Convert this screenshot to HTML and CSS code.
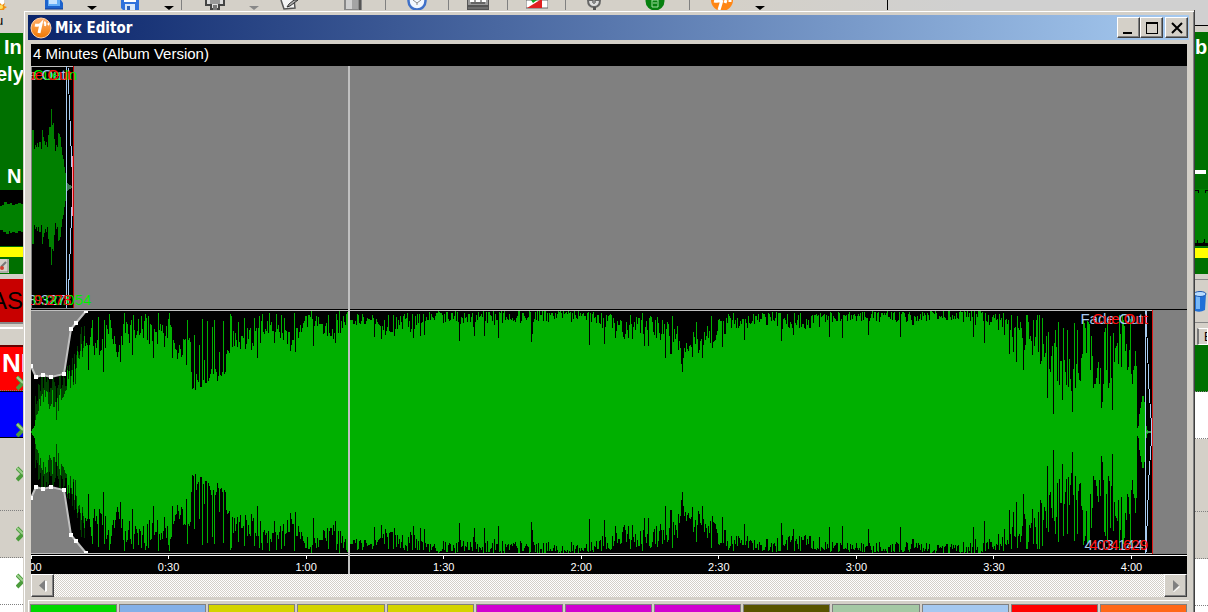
FILE: index.html
```html
<!DOCTYPE html>
<html lang="en">
<head>
<meta charset="utf-8">
<meta name="viewport" content="width=device-width, initial-scale=1">
<title>Mix Editor</title>
<link rel="stylesheet" href="styles.css">
</head>
<body>
<div class="desktop">
  <header class="toolbar">
    <button class="tool tool-new" aria-label="New"><svg width="8" height="13" viewBox="0 0 8 13"><path d="M0 0h4v10H0z" fill="#fff"/><path d="M0 3l2 2 3-2-1 3 3 1-3 2 1 3-3-1-2 1z" fill="#f09010"/><circle cx="1" cy="7" r="2" fill="#ffe060"/></svg></button>
    <button class="tool" aria-label="Open"><svg width="20" height="10" viewBox="0 0 20 10"><path d="M1 0h16l2 3v6H1z" fill="#1c62cc"/><path d="M4 0h12v6H4z" fill="#63aef8"/><path d="M5 0h8v4H5z" fill="#c6e4ff"/><path d="M1 9h18" stroke="#123c90"/></svg></button>
    <button class="tool" aria-label="Open menu"><svg width="10" height="10" viewBox="0 0 10 10"><path d="M0 6h10L5 10z"/></svg></button>
    <button class="tool" aria-label="Save"><svg width="18" height="10" viewBox="0 0 18 10"><path d="M0 0h18v10H2L0 8z" fill="#2f72dc"/><path d="M3 0h12v2H3z" fill="#fff"/><path d="M4 4h10v6H4z" fill="#d8e8fa"/><path d="M6 6h3v4H6z" fill="#2f62b8"/></svg></button>
    <button class="tool sep" aria-label="Save menu"><svg width="10" height="10" viewBox="0 0 10 10"><path d="M0 6h10L5 10z"/></svg></button>
    <button class="tool" aria-label="Device"><svg width="20" height="10" viewBox="0 0 20 10"><path d="M1 0v5h5v4h8V5h5V0" fill="#ddd" stroke="#444" stroke-width="2"/><path d="M5 0h10v4H5z" fill="#999"/><path d="M8 5h4v5H8z" fill="#777"/></svg></button>
    <button class="tool" aria-label="Device menu"><svg width="10" height="10" viewBox="0 0 10 10"><path d="M0 6h10L5 10z" fill="#888"/></svg></button>
    <button class="tool" aria-label="Edit"><svg width="20" height="10" viewBox="0 0 20 10"><path d="M1 0l3 9 11-1-1-8" fill="#f4f4f4" stroke="#555" stroke-width="1.5"/><path d="M18 0l-8 6-3 1 2-3 5-4z" fill="#aaa" stroke="#333"/></svg></button>
    <button class="tool sep" aria-label="Library"><svg width="18" height="10" viewBox="0 0 18 10"><path d="M0 0h18v10H0z" fill="#888"/><path d="M2 0h6v9H2z" fill="#d0d0d0"/><path d="M8 0h6v9H8z" fill="#a4a4a4"/><path d="M15 0h2v10h-2z" fill="#555"/></svg></button>
    <button class="tool sep" aria-label="Scheduler"><svg width="20" height="11" viewBox="0 0 20 11"><circle cx="10" cy="1" r="8.5" fill="#f3f8ff" stroke="#3f70c8" stroke-width="2.5"/><path d="M6 0l4 3 4-3M10 3v2" fill="none" stroke="#888"/></svg></button>
    <button class="tool sep" aria-label="Carts"><svg width="22" height="10" viewBox="0 0 22 10"><path d="M0 0h22v10H0z" fill="#555"/><path d="M1 0h20v5H1z" fill="#999"/><path d="M3 1h4m2 0h4m2 0h4" stroke="#fff" stroke-width="2"/><path d="M4 3h14" stroke="#333"/><path d="M1 8h20" stroke="#888"/></svg></button>
    <button class="tool sep" aria-label="Levels"><svg width="22" height="9" viewBox="0 0 22 9"><path d="M0 0h22v8H0z" fill="#fff" stroke="#666"/><path d="M1 8L14 0h2v8z" fill="#e02020"/><path d="M5 0h6L7 3z" fill="#10a020"/></svg></button>
    <button class="tool" aria-label="Microphone"><svg width="16" height="10" viewBox="0 0 16 10"><path d="M2 0q0 7 6 7t6-7z" fill="#ddd" stroke="#666" stroke-width="2"/><path d="M8 0v4M6 2h4" stroke="#888" stroke-width="2"/><path d="M7 7h3v3H7z" fill="#555"/></svg></button>
    <button class="tool sep" aria-label="Remote"><svg width="20" height="11" viewBox="0 0 20 11"><circle cx="10" cy="1" r="9.5" fill="#078010"/><path d="M7 0h6v7H7zM8 3h4" fill="none" stroke="#a0e0a0"/></svg></button>
    <button class="tool" aria-label="About"><svg width="24" height="11" viewBox="0 0 24 11"><circle cx="12" cy="0" r="11" fill="#ff8614"/><path d="M4 1q5 1 7-1M12 0L9 10M16 0l-1 3M20 0v2" fill="none" stroke="#fff" stroke-width="3"/></svg></button>
    <button class="tool" aria-label="About menu"><svg width="10" height="10" viewBox="0 0 10 10"><path d="M0 6h10L5 10z"/></svg></button>
    <span class="toolbar-end"></span>
  </header>

  <aside class="left">
    <div class="left-head">u</div>
    <div class="deck"><span class="deck-line">In</span><span class="deck-line deck-wide">elyn</span><span class="deck-next">N</span></div>
    <div class="mini-wave"><svg width="24" height="56" viewBox="0 0 24 56"><path fill="#008000" d="M0 16h2v-1h2v-3h3v2h3v-1h2v2h3v-1h3v-1h3v1h3v28h-3v-1h-3v2h-3v-1h-3v1h-2v-2H9v3H6v-2H3v-2H0z"/></svg></div>
    <div class="yellow"></div>
    <div class="mini-tool"><svg width="9" height="14" viewBox="0 0 9 14"><path d="M0 0h9v14H0z" fill="#d4d0c8"/><path d="M0 13h8V0" fill="none" stroke="#888"/><path d="M1 8l5-5" stroke="#777" stroke-width="2"/><circle cx="2" cy="9" r="2" fill="#d04030"/></svg></div>
    <button class="assist">AS</button>
    <div class="left-gap"></div>
    <div class="row row-now"><span>NI</span><svg class="chev" width="9" height="16" viewBox="0 0 9 16"><path d="M1 2l6 6-6 6" fill="none" stroke="#4c9c3c" stroke-width="4"/><path d="M1 2l6 6" stroke="#9cd08c" stroke-width="2"/></svg></div>
    <div class="row row-next"><svg class="chev" width="9" height="16" viewBox="0 0 9 16"><path d="M1 2l6 6-6 6" fill="none" stroke="#4c9c3c" stroke-width="4"/><path d="M1 2l6 6" stroke="#9cd08c" stroke-width="2"/></svg></div>
    <div class="row row-tall"><svg class="chev" width="9" height="16" viewBox="0 0 9 16"><path d="M1 2l6 6-6 6" fill="none" stroke="#4c9c3c" stroke-width="4"/><path d="M1 2l6 6" stroke="#9cd08c" stroke-width="2"/></svg></div>
    <div class="row"><svg class="chev" width="9" height="16" viewBox="0 0 9 16"><path d="M1 2l6 6-6 6" fill="none" stroke="#4c9c3c" stroke-width="4"/><path d="M1 2l6 6" stroke="#9cd08c" stroke-width="2"/></svg></div>
    <div class="row row-white"><svg class="chev" width="9" height="16" viewBox="0 0 9 16"><path d="M1 2l6 6-6 6" fill="none" stroke="#4c9c3c" stroke-width="4"/><path d="M1 2l6 6" stroke="#9cd08c" stroke-width="2"/></svg></div>
    <div class="row-rest"></div>
  </aside>

  <main class="window">
    <div class="titlebar">
      <svg class="logo" width="22" height="22" viewBox="0 0 22 22"><defs><linearGradient id="og" x1="0" y1="0" x2="0" y2="1"><stop offset="0" stop-color="#ffb070"/><stop offset="1" stop-color="#f07800"/></linearGradient></defs><circle cx="11" cy="11" r="10" fill="url(#og)" stroke="#ffd2a4"/><path d="M5 8q4 1 6-1L9 16" fill="none" stroke="#fff" stroke-width="3"/><path d="M14 5q2 1 1 4M18 6q1 1 0 2" fill="none" stroke="#fff" stroke-width="2"/></svg>
      <h1 class="title">Mix Editor</h1>
      <button class="win-btn" aria-label="Minimize"><svg width="17" height="15" viewBox="0 0 17 15"><path d="M3 13h9" stroke="#000" stroke-width="2"/></svg></button>
      <button class="win-btn" aria-label="Maximize"><svg width="17" height="15" viewBox="0 0 17 15"><path d="M3.500 3v11M14.500 3v11M3 13.500h12" stroke="#000"/><path d="M3 3h12" stroke="#000" stroke-width="2"/></svg></button>
      <button class="win-btn close" aria-label="Close"><svg width="17" height="15" viewBox="0 0 17 15"><path d="M4 3l10 10M14 3L4 13" stroke="#000" stroke-width="2"/></svg></button>
    </div>
    <div class="editor">
      <div class="song">4 Minutes (Album Version)</div>
      <div class="timeline">
        <section class="track track-a">
          <svg class="wave" viewBox="0 0 1156 243" preserveAspectRatio="none" shape-rendering="crispEdges">
            <path d="M1 0h42v242H1z"/>
            <path d="M0 .5h43" stroke="#c0c0c0"/>
            <path id="waveA" fill="#008000"/>
            <path d="M35 116l7 5-7 5z" fill="#3c7850"/>
            <path d="M37 2l3 78 2 41M37 240l3-78 2-41" fill="none" stroke="#a6caf0"/>
            <path d="M35 0h1v242h-1z" fill="#a6caf0"/>
            <path d="M41 90h1v60h-1z" fill="#ff90a0"/>
            <path d="M42 0h1v242h-1z" fill="#c80000"/>
          </svg>
          <span class="mark top fade mark-a-fade">Fade Out</span><span class="mark top in">Cue In</span><span class="mark top cue mark-a-cue">Cue Out</span>
          <span class="mark bottom fade mark-a-fade">3:18.327</span><span class="mark bottom in">0:00.054</span><span class="mark bottom cue mark-a-cue">3:19.278</span>
        </section>
        <section class="track track-b">
          <svg class="wave" viewBox="0 0 1156 244" preserveAspectRatio="none" shape-rendering="crispEdges">
            <path d="M0 0h1122v244H0z"/>
            <path id="waveDark" fill="#004000"/>
            <path id="waveB" fill="#00b000"/>
            <path d="M1115 122h7" stroke="#3c9c50" stroke-width="2"/>
            <path d="M0 0v56l5 11 7-2 8 2 13-3 7-45 5-6 10-12V0zM0 244v-56l5-11 7 2 8-2 13 3 7 45 5 6 10 12z" fill="#808080"/>
            <path d="M0 56l5 11 7-2 8 2 13-3 7-45 5-6 10-12M0 188l5-11 7 2 8-2 13 3 7 45 5 6 10 12" fill="none" stroke="#c0c0c0" stroke-width="2" shape-rendering="auto"/>
            <path id="nodes" fill="#fff"/>
            <path d="M0 .5h1122M0 243.500h1122" stroke="#c0c0c0"/>
            <path d="M1115 1l3 78 3 43M1115 243l3-78 3-43" fill="none" stroke="#a6caf0"/>
            <path d="M1114 0h1v244h-1z" fill="#a6caf0"/>
            <path d="M1121 0h1v244h-1z" fill="#e01818"/>
          </svg>
          <span class="mark top fade mark-b-fade">Fade Out</span><span class="mark top cue mark-b-cue">Cue Out</span>
          <span class="mark bottom fade mark-b-fade">4:03.144</span><span class="mark bottom cue mark-b-cue">4:04.629</span>
        </section>
        <div class="ruler"><span>0:00</span><span>0:30</span><span>1:00</span><span>1:30</span><span>2:00</span><span>2:30</span><span>3:00</span><span>3:30</span><span>4:00</span></div>
        <div class="playhead"></div>
      </div>
      <div class="scrollbar">
        <button class="scroll-btn" aria-label="Scroll left"><svg width="9" height="12" viewBox="0 0 9 12"><path d="M7 1v11l2-1V1z" fill="#fff"/><path d="M7 0v11L1 5.500z" fill="#808080"/></svg></button>
        <button class="scroll-btn" aria-label="Scroll right"><svg width="9" height="12" viewBox="0 0 9 12"><path d="M2 12l6-6 1 1-6 5z" fill="#fff"/><path d="M2 0v11l6-5.500z" fill="#808080"/></svg></button>
      </div>
    </div>
    <div class="carts">
      <button class="cart green" aria-label="Cart 1"></button><button class="cart blue" aria-label="Cart 2"></button><button class="cart gold" aria-label="Cart 3"></button><button class="cart gold" aria-label="Cart 4"></button><button class="cart gold" aria-label="Cart 5"></button><button class="cart magenta" aria-label="Cart 6"></button><button class="cart magenta" aria-label="Cart 7"></button><button class="cart magenta" aria-label="Cart 8"></button><button class="cart olive" aria-label="Cart 9"></button><button class="cart sage" aria-label="Cart 10"></button><button class="cart sky" aria-label="Cart 11"></button><button class="cart red" aria-label="Cart 12"></button><button class="cart orange" aria-label="Cart 13"></button>
    </div>
  </main>

  <aside class="right">
    <div class="right-head"></div>
    <div class="right-deck">b<span class="level"></span></div>
    <div class="right-wave"><svg width="13" height="58" viewBox="0 0 13 58"><path fill="#008000" d="M0 0h13v58H0z"/><path d="M0 1h4v3H3V2H0zM10 1h3v1h-2v2h-1zM0 54h2v-3h1v3h5v-1h1v-3h1v4h3v3H0z"/></svg></div>
    <div class="yellow"></div>
    <div class="right-foot"></div>
    <div class="bin"><svg width="12" height="22" viewBox="0 0 12 22"><path d="M0 3h11l-1 16q-5 3-10 1z" fill="#2070d8"/><path d="M1 5h4v13H1z" fill="#78b8f8"/><ellipse cx="5" cy="3" rx="6" ry="2.500" fill="#b8dcff" stroke="#1c58b0"/></svg></div>
    <div class="col-head">E</div>
    <div class="row row-green"></div>
    <div class="row row-white"></div>
    <div class="row row-tall"></div>
    <div class="row"></div>
    <div class="row row-white"></div>
    <div class="row-rest"></div>
  </aside>
</div>
<script src="waveform.js"></script>
</body>
</html>
```

FILE: styles.css
```css
* { box-sizing: border-box; }
body {
  margin: 0;
  background: #d4d0c8;
  font-family: "Liberation Sans", Arial, sans-serif;
}
button { padding: 0; border: 0; border-radius: 0; font: inherit; background: none; }
svg { display: block; flex: none; }

.desktop {
  display: grid;
  grid-template-columns: 23px minmax(0, 1fr) 13px;
  grid-template-rows: 10px minmax(0, 1fr);
  height: 100vh;
  overflow: hidden;
}

/* application toolbar behind the window */
.toolbar {
  grid-column: 1 / -1;
  display: grid;
  grid-template-columns: 28px 52px 24px 52px 26px 66px 12px 60px 66px 63px 59px 58px 55px 69px 64px 12px 122px;
  justify-items: center;
  background: linear-gradient(90deg, #d4d0c8 60%, #d0d0d0 80%);
}
.toolbar > :nth-child(n) { height: 10px; }
.tool { width: 100%; display: flex; justify-content: center; overflow: hidden; }
.tool-new { justify-content: flex-start; }
.sep { border-right: 1px solid #808080; }
.toolbar-end { width: 100%; border-right: 1px solid #000; }

/* side strips */
.left, .right { display: flex; flex-direction: column; min-width: 0; overflow: hidden; }
.left > *, .right > * { flex: none; overflow: hidden; }
.left-head { height: 23px; font-size: 13px; line-height: 22px; text-indent: -4px; }
.deck {
  display: flex;
  flex-direction: column;
  height: 157px;
  background: #007000;
  color: #fff;
  font-size: 20px;
  font-weight: bold;
  line-height: 26px;
}
.deck-line { padding: 1px 0 0 4px; }
.deck-wide { margin-left: -8px; }
.deck-next { padding: 76px 0 0 7px; }
.mini-wave { height: 56px; background: #000; }
.yellow { height: 11px; border-top: 1px solid #007000; background: #ff0; }
.mini-tool { height: 17px; padding-top: 2px; background: #007000; }
.assist {
  height: 48px;
  border-top: 5px solid #d4d0c8;
  background: #c80000;
  color: #000;
  font-size: 24px;
  line-height: 43px;
  text-align: left;
  text-indent: -9px;
}
.left-gap { height: 23px; border-top: 2px solid #888; background: linear-gradient(#d4d0c8 3px, #fff 3px, #fff 5px, #d4d0c8 5px); }
.row { height: 47px; border-bottom: 1px dotted #808080; background: #d4d0c8; }
.left .row { display: flex; flex-direction: column; justify-content: center; align-items: flex-end; }
.left .row-now {
  height: 46px;
  justify-content: flex-start;
  border-top: 2px solid #600;
  background: #f00;
  color: #fff;
  font-size: 26px;
  font-weight: bold;
  line-height: 24px;
  padding-top: 4px;
}
.row-now span { align-self: flex-start; padding-left: 2px; }
.chev { margin-right: -2px; }
.left .row-next { background: #00f; border: 1px solid #000; border-width: 1px 0; padding-top: 30px; }
.row-tall { height: 73px; }
.left .row-white, .row-white { background: #fff; }
.row-rest { height: 20px; background: #fff; }
.right-head { height: 22px; background: linear-gradient(#d0d0d0 15px, #000 15px, #000 16px, #d4d0c8 16px); }
.right-deck { height: 157px; background: #007000; color: #fff; font-size: 20px; font-weight: bold; line-height: 30px; }
.level { display: block; width: 11px; height: 4px; margin-top: 108px; background: #fff; }
.right-wave { height: 58px; }
.right-foot { height: 16px; background: #007000; }
.bin { height: 44px; margin-top: 5px; padding-top: 11px; border-top: 1px solid #888; border-bottom: 1px solid #888; }
.col-head { height: 17px; margin: 5px 0 0 2px; border: 1px solid #fff; border-left: 2px solid #777; padding-left: 5px; font-size: 12px; line-height: 17px; }
.row-green { background: #007000; }

/* window frame */
.window {
  display: flex;
  flex-direction: column;
  min-width: 0;
  border-right: 1px solid #404040;
  box-shadow: inset 1px 0 #d4d0c8, inset 0 1px #d4d0c8, inset 2px 2px #fff, inset -1px 0 #808080;
  background: #d4d0c8;
  padding: 5px 5px 0;
}
.titlebar {
  flex: none;
  display: flex;
  align-items: center;
  height: 25px;
  padding: 0 1px 0 2px;
  background: linear-gradient(90deg, #0a246a, #a6caf0);
}
.title {
  flex: 1;
  margin: 0 0 0 3px;
  color: #fff;
  font: bold 15px/20px "DejaVu Sans Condensed", "DejaVu Sans", sans-serif;
}
.win-btn, .scroll-btn {
  background: #d4d0c8;
  border: 1px solid;
  border-color: #fff #404040 #404040 #fff;
  box-shadow: inset -1px -1px #808080;
}
.win-btn { width: 23px; height: 21px; padding: 1px 2px; }
.close { margin-left: 2px; }
.editor { flex: 1; min-height: 0; display: flex; flex-direction: column; margin: 4px 2px 0 3px; }
.song { height: 22px; padding-left: 2px; background: #000; color: #fff; font-size: 15px; line-height: 20px; }

.timeline { position: relative; flex: 1; min-height: 0; display: flex; flex-direction: column; }
.track { position: relative; min-height: 0; overflow: hidden; background: #808080; border-bottom: 1px solid #000; }
.track-a { flex: 244 0 0; }
.track-b { flex: 245 0 0; }
.wave { width: 100%; height: 100%; }
.mark { position: absolute; font-size: 15px; line-height: 17px; white-space: nowrap; }
.top { top: 0; }
.bottom { bottom: 1px; }
.fade { color: #a6caf0; }
.cue { color: #ff1010; }
.in { color: #0e0; left: 2px; }
.mark-a-fade { right: 97%; }
.mark-a-cue { right: 96.5%; }
.mark-b-fade { right: 44px; }
.mark-b-cue { right: 39px; }
.ruler {
  flex: none;
  display: grid;
  grid-template-columns: repeat(9, 11.9%);
  height: 19px;
  overflow: hidden;
  background: #000;
  border-top: 1px solid #fff;
  color: #fff;
  font-size: 11px;
  line-height: 16px;
  text-align: center;
}
.ruler span { margin-left: -100%; }
.ruler span::before { content: ""; display: block; width: 1px; height: 3px; margin: 0 auto; background: #fff; }
.playhead { position: absolute; top: 0; bottom: 0; left: 27.4%; width: 2px; background: #c0c0c0; }

.scrollbar {
  flex: none;
  display: flex;
  justify-content: space-between;
  height: 23px;
  background: conic-gradient(#d4d0c8 25%, #fff 0 50%, #d4d0c8 0 75%, #fff 0) 0 0 / 2px 2px;
}
.scroll-btn { width: 23px; display: flex; align-items: center; justify-content: center; }

/* cart strip */
.carts {
  flex: none;
  display: grid;
  grid-template-columns: repeat(13, minmax(0, 1fr));
  gap: 2px;
  height: 12px;
  margin-top: 3px;
  padding: 3px 2px 0 1px;
  border-top: 1px solid #fff;
  border-left: 1px solid #fff;
}
.cart { border: 1px solid #808080; border-bottom: 0; }
.green { background: #00d800; }
.blue { background: #84b0e8; }
.gold { background: #d4d400; }
.magenta { background: #d000d0; }
.olive { background: #585400; }
.sage { background: #a4c8a4; }
.sky { background: #a4c8f0; }
.red { background: #f00; }
.orange { background: #ff6818; }
```

FILE: waveform.js
```js
// Deterministic noise, so that the waveform is the same on every load.
let seed = 7;
function rand() {
  seed = (seed * 1103515245 + 12345) % 2147483648;
  return seed / 2147483648;
}

// Builds a mirrored, stepped outline from half heights, one per column.
function outline(heights, x0, mid) {
  let top = `M${x0} ${mid}`;
  let bottom = "";
  heights.forEach((h, i) => {
    top += `V${mid - h}H${x0 + i + 1}`;
    bottom = `V${mid + h}H${x0 + i}` + bottom;
  });
  return top + bottom + "Z";
}

// First track: tail of the outgoing song.
const tail = [57,57,38,42,40,44,40,45,45,38,57,50,46,42,45,40,52,60,60,78,62,64,48,36,42,40,54,53,50,40,32,28,20,14,8];
document.getElementById("waveA").setAttribute("d", outline(tail, 1, 121));

// Second track: [column, shallowest gap, deepest gap] from the track edge.
const shape = [
  [0,120,121],[2,116,120],[4,104,112],[8,88,98],[12,78,92],[16,80,100],[20,74,100],[25,88,112],[29,78,98],
  [34,62,84],[39,52,88],[44,34,78],[49,26,56],[54,4,46],[57,12,50],[64,16,46],[69,32,50],[72,5,56],[79,5,34],
  [87,30,50],[93,3,30],[103,5,40],[111,5,30],[119,5,40],[126,20,48],[131,5,40],[139,5,30],[145,25,50],
  [153,28,46],[159,25,50],[161,66,80],[165,64,80],[169,60,78],[175,62,76],[184,56,72],[191,52,68],[195,40,60],
  [198,14,44],[204,16,46],[212,22,38],[217,14,42],[225,16,46],[232,4,30],[240,8,22],[247,4,26],[253,20,40],
  [260,20,42],[266,14,32],[275,5,22],[285,6,26],[295,12,32],[306,10,30],[316,3,26],[320,6,18],[340,8,16],
  [345,4,20],[353,14,28],[362,4,22],[378,5,26],[391,1,14],[410,1,16],[430,1,18],[450,1,18],[480,0,14],
  [510,0,12],[550,0,12],[573,3,22],[582,5,26],[592,12,30],[601,4,20],[614,3,28],[622,8,32],[633,8,30],
  [642,18,35],[650,28,46],[656,20,44],[664,22,38],[670,24,60],[676,16,26],[682,30,44],[688,6,22],
  [697,5,26],[712,8,24],[725,3,14],[743,1,16],[760,3,22],[775,3,22],[790,5,18],[800,1,14],[825,1,12],
  [850,1,14],[880,1,16],[905,0,12],[940,0,14],[965,2,20],[975,8,30],[983,14,40],[989,4,24],[995,16,48],
  [1004,16,52],[1012,18,60],[1020,30,66],[1030,40,78],[1040,36,82],[1052,22,72],[1060,40,80],[1070,26,72],
  [1078,50,80],[1086,22,56],[1096,26,66],[1101,54,84],[1106,20,50],[1112,20,60]
];
// Columns whose gap is known: [column, gap].
const known = [
  [57,60],[72,62],[89,52],[101,45],[122,48],[141,48],[155,55],[164,80],[168,35],[173,50],[188,42],[199,4],
  [226,48],[214,39],[222,36],[231,4],[238,3],[243,33],[264,42],[280,1],[282,36],[304,33],[308,1],[316,2],
  [343,27],[350,29],[363,26],[382,28],[389,26],[393,25],[428,31],[443,26],[453,26],[467,28],[500,32],[501,24],
  [558,35],[573,34],[584,28],[597,28],[601,29],[613,36],[617,36],[634,48],[639,44],[640,44],[650,54],[651,62],
  [652,48],[661,47],[677,28],[691,37],[713,30],[750,31],[762,25],[779,18],[798,27],[811,28],[837,25],[869,27],
  [942,27],[953,33],[978,44],[982,42],[985,52],[992,60],[995,5],[996,5],[997,12],[1016,88],[1017,22],
  [1022,104],[1031,90],[1036,20],[1041,102],[1046,20],[1054,18],[1059,60],[1070,98],[1071,92],[1076,12],
  [1081,100],[1092,10],[1093,16],[1096,60]
];
const lens = [118,116,104,98,92,86,86,92,94,116,120];
const heights = [];
let k = 0;
for (let x = 0; x < 1106; x += 1) {
  while (shape[k + 1][0] <= x) k += 1;
  const [xa, la, ha] = shape[k];
  const [xb, lb, hb] = shape[k + 1];
  const t = (x - xa) / (xb - xa);
  const low = la + (lb - la) * t;
  const high = ha + (hb - ha) * t;
  const power = x < 230 || x > 990 ? 0.8 : 1.3;
  let gap = low + (high - low) * Math.pow(rand(), power);
  // Lone peaks stand well above the body of the sound.
  const chance = x > 1000 ? 0.2 : 0.13;
  if (x > 54 && rand() < chance) gap = Math.min(gap, 3 + low * 0.6 * rand());
  heights.push(Math.round(122 - gap));
}
known.forEach(([x, gap]) => { heights[x] = 122 - gap; });
lens.forEach((gap) => heights.push(122 - gap));
document.getElementById("waveB").setAttribute("d", outline(heights, 0, 122));

// Unfaded level, seen dim under the volume curve.
const raw = heights.slice(0, 54).map((h, x) => {
  if (x < 4) return h;
  return Math.min(116, h + Math.round((x < 34 ? 26 : 14) * (0.2 + rand())));
});
document.getElementById("waveDark").setAttribute("d", outline(raw, 0, 122));

// Handles of the volume curve.
const handles = [[0,56],[5,67],[12,65],[20,67],[33,64],[40,19],[45,13],[55,1]];
document.getElementById("nodes").setAttribute("d", handles.map(([x, y]) =>
  `M${x - 2} ${y - 2}h4v4h-4zM${x - 2} ${242 - y}h4v4h-4z`).join(""));
```
